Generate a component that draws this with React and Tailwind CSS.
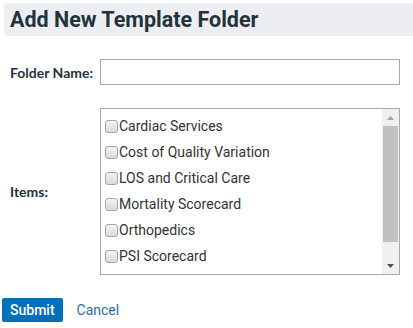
import React from 'react';

const ITEMS = [
    'Cardiac Services',
    'Cost of Quality Variation',
    'LOS and Critical Care',
    'Mortality Scorecard',
    'Orthopedics',
    'PSI Scorecard',
    'Readmissions',
];

const Box = () => (
    <span className="inline-block w-[13px] h-[13px] shrink-0 rounded-[3px] border border-[#a6a6a6] bg-gradient-to-b from-[#f4f4f4] to-[#d9d9d9]" />
);

const App = () => {
    return (
        <div className="w-[413px] h-[328px] bg-white overflow-hidden font-['Roboto',sans-serif] text-[#333]">
            {/* Title bar */}
            <div className="ml-[4px] mt-[3px] h-[33px] bg-[#eceef1] rounded-l-[4px] flex items-center pl-[6px]">
                <h1 className="text-[21.5px] font-bold text-[#25323d] leading-none">Add New Template Folder</h1>
            </div>

            {/* Folder name row */}
            <div className="flex items-center mt-[23px]">
                <label className="w-[100px] pl-[10px] font-['Lato',sans-serif] font-bold text-[14px] text-[#25323d]">Folder Name:</label>
                <input type="text" className="w-[300px] h-[26px] border border-[#a9a9a9] bg-white outline-none" />
            </div>

            {/* Items row */}
            <div className="flex items-center mt-[23px]">
                <label className="w-[100px] pl-[10px] font-['Lato',sans-serif] font-bold text-[14px] text-[#25323d]">Items:</label>
                <div className="w-[300px] h-[167px] border border-[#a9a9a9] flex overflow-hidden">
                    <ul className="flex-1 pl-[4px] pt-[4px] overflow-hidden">
                        {ITEMS.map((item) => (
                            <li key={item} className="h-[26px] flex items-center gap-[1px] text-[14px] text-[#333]">
                                <Box />
                                <span>{item}</span>
                            </li>
                        ))}
                    </ul>
                    {/* Scrollbar */}
                    <div className="w-[17px] bg-[#f0f0f0] flex flex-col items-center">
                        <div className="h-[17px] flex items-center justify-center">
                            <svg width="7" height="4" viewBox="0 0 7 4"><path d="M3.5 0L7 4H0z" fill="#a3a3a3" /></svg>
                        </div>
                        <div className="w-[15px] h-[116px] bg-[#c1c1c1]" />
                        <div className="flex-1" />
                        <div className="h-[17px] flex items-center justify-center">
                            <svg width="7" height="4" viewBox="0 0 7 4"><path d="M0 0H7L3.5 4z" fill="#505050" /></svg>
                        </div>
                    </div>
                </div>
            </div>

            {/* Actions */}
            <div className="flex items-center mt-[23px] pl-[2px] gap-[14px]">
                <button className="h-[24px] px-[8px] bg-[#0070ba] text-white text-[14px] font-medium rounded-[2px]">Submit</button>
                <a href="#" className="text-[14px] text-[#2e6da4]">Cancel</a>
            </div>
        </div>
    );
};

export default App;
